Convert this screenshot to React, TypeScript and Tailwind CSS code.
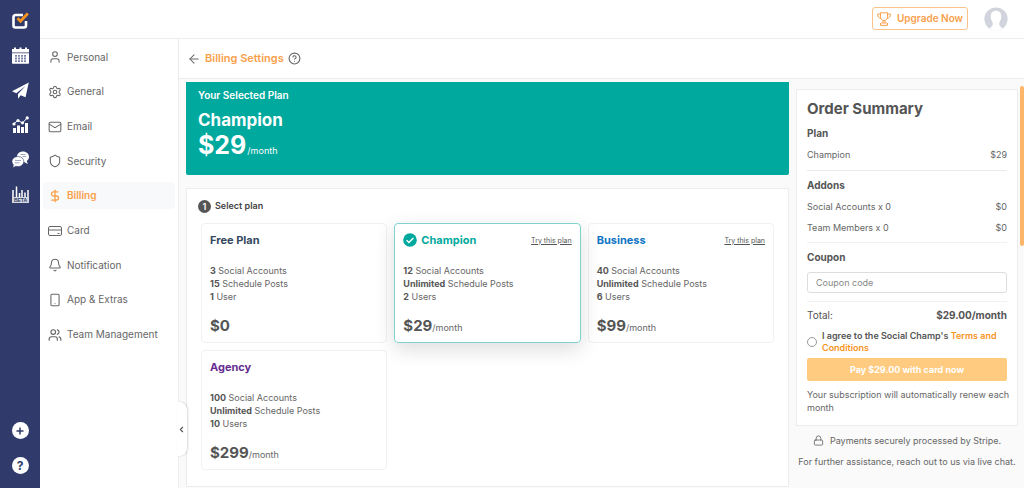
import { useState } from 'react';
import type { ReactNode } from 'react';
import {
  ArrowLeft,
  Bell,
  ChevronLeft,
  CircleHelp,
  DollarSign,
  Lock,
  Mail,
  Settings,
  Shield,
  Smartphone,
  User,
  Users,
} from 'lucide-react';
import clsx from 'clsx';

interface Plan {
  name: string;
  color: string;
  accounts: string;
  posts: string;
  users: string;
  userLabel: string;
  price: string;
  paid: boolean;
  trial: boolean;
}

const plans: Plan[] = [
  { name: 'Free Plan', color: 'text-[#34495e]', accounts: '3', posts: '15', users: '1', userLabel: 'User', price: '$0', paid: false, trial: false },
  { name: 'Champion', color: 'text-[#00a99d]', accounts: '12', posts: 'Unlimited', users: '2', userLabel: 'Users', price: '$29', paid: true, trial: true },
  { name: 'Business', color: 'text-[#0f75c4]', accounts: '40', posts: 'Unlimited', users: '6', userLabel: 'Users', price: '$99', paid: true, trial: true },
  { name: 'Agency', color: 'text-[#662d91]', accounts: '100', posts: 'Unlimited', users: '10', userLabel: 'Users', price: '$299', paid: true, trial: false },
];

const menu: { label: string; icon: ReactNode }[] = [
  { label: 'Personal', icon: <User className="size-[14px]" strokeWidth={1.8} /> },
  { label: 'General', icon: <Settings className="size-[14px]" strokeWidth={1.8} /> },
  { label: 'Email', icon: <Mail className="size-[14px]" strokeWidth={1.8} /> },
  { label: 'Security', icon: <Shield className="size-[14px]" strokeWidth={1.8} /> },
  { label: 'Billing', icon: <DollarSign className="size-[14px]" strokeWidth={2.2} /> },
  { label: 'Card', icon: <CardIcon /> },
  { label: 'Notification', icon: <Bell className="size-[14px]" strokeWidth={1.8} /> },
  { label: 'App & Extras', icon: <Smartphone className="size-[14px]" strokeWidth={1.8} /> },
  { label: 'Team Management', icon: <Users className="size-[14px]" strokeWidth={2} /> },
];

function CardIcon() {
  return (
    <svg viewBox="0 0 14 14" className="size-[14px]" fill="none" stroke="currentColor">
      <rect x=".5" y="2.500" width="13" height="9" rx="1.500" />
      <path d="M.500 6h13M9.500 9.500h2" />
    </svg>
  );
}

function LogoIcon() {
  return (
    <svg viewBox="0 0 17 17" className="size-[17px]" fill="none">
      <path d="M11 3H3.500A2 2 0 0 0 1.500 5v8.500a2 2 0 0 0 2 2H12a2 2 0 0 0 2-2V9" stroke="#fff" strokeWidth="2.600" />
      <path d="M5.500 6.200l3 3L15.800 1.500" stroke="#f7931e" strokeWidth="2.800" />
    </svg>
  );
}

function CalendarIcon() {
  return (
    <svg viewBox="0 0 17 17" className="size-[17px]" fill="#fff">
      <path d="M0 2h2V.500h2V2h3.500V.500h2V2H13V.500h2V2h2v3.500H0z" />
      <path d="M0 6.300h17V16a.8.8 0 0 1-.8.800H.8A.8.8 0 0 1 0 16z" />
      <path
        d="M3 8h2v1.800H3zM6 8h2v1.800H6zM9 8h2v1.800H9zM12 8h2v1.800h-2zM3 10.600h2v1.800H3zM6 10.600h2v1.800H6zM9 10.600h2v1.800H9zM12 10.600h2v1.800h-2zM3 13.200h2V15H3zM6 13.200h2V15H6zM9 13.200h2V15H9zM12 13.200h2V15h-2z"
        fill="#7d85ab"
      />
    </svg>
  );
}

function PlaneIcon() {
  return (
    <svg viewBox="0 0 17 17" className="size-[17px]" fill="#fff">
      <path d="M16.800.500L0 9.300l4.300 1.900L13.500 4 6 12v4.800l2.700-3.500 4.800 2z" />
    </svg>
  );
}

function AnalyticsIcon() {
  return (
    <svg viewBox="0 0 17 17" className="size-[17px]" fill="#fff">
      <path d="M1 12h3v5H1zM5 9.500h3V17H5zM9 11h3v6H9zM13 7h3v10h-3z" />
      <path d="M2 7.500l4-3 4.500 2.500 4.500-5" fill="none" stroke="#fff" strokeWidth="1" />
      <circle cx="2" cy="8" r="1.600" />
      <circle cx="6" cy="4.500" r="1.600" />
      <circle cx="10.500" cy="6.800" r="1.600" />
      <circle cx="15.200" cy="1.900" r="1.600" />
    </svg>
  );
}

function ChatIcon() {
  return (
    <svg viewBox="0 0 17 17" className="size-[17px]">
      <path d="M11 .500c3.400 0 6 2.300 6 5.200 0 1.800-.8 3.200-2.200 4.200l1 3-3.800-1.900C8 11.500 5 9 5 5.800S7.600.500 11 .500z" fill="#fff" />
      <path d="M6 5.500c3.300 0 5.800 2.200 5.800 5s-2.500 5.100-5.800 5.100c-.8 0-1.500-.1-2.200-.3L.8 16.800l.600-3C.500 12.900 0 11.800 0 10.500c0-2.800 2.700-5 6-5z" fill="#fff" stroke="#303b6b" strokeWidth=".6" />
      <path d="M8.500 3.500h5M10.500 5.500H14M3 9.500h6M3 11.800h4.500" stroke="#8a91b3" strokeWidth=".8" />
    </svg>
  );
}

function BetaIcon() {
  return (
    <svg viewBox="0 0 17 17" className="size-[17px]">
      <path d="M1 4v8M4.500.500V12M7.500 7v5M10 4v8M13 6.500V12M16 4v8" stroke="#fff" strokeWidth="1.500" />
      <path d="M0 11h17v6H0z" fill="#d5d7df" />
      <text x="8.500" y="16" textAnchor="middle" fontSize="5" fontWeight="700" fontFamily="Liberation Sans, sans-serif" fill="#303b6b">
        BETA
      </text>
    </svg>
  );
}

function TrophyIcon() {
  return (
    <svg viewBox="0 0 14 14" className="size-[14px]" fill="none" stroke="#f9a04b" strokeWidth="1">
      <path d="M3.500.800h7v4C10.500 7 9 8.500 7 8.500S3.500 7 3.500 4.800z" />
      <path d="M3.500 2H.600c0 2.800 1.200 4 3.400 4.300M10.500 2h2.900c0 2.800-1.200 4-3.400 4.300M6 8.500v2.300M8 8.500v2.300M4.300 11h5.400M3.500 11v2.400h7V11" />
    </svg>
  );
}

function Avatar() {
  return (
    <svg viewBox="0 0 24 24" className="size-6">
      <circle cx="12" cy="12" r="11.600" fill="#d1d4dc" />
      <path d="M12 3.800c3.400 0 5.300 2.400 5.300 5.700 0 2.500-1 4.500-2 5.700v2.300c0 1.700 1.200 2.400 3.200 3.700-1.900 1.600-4.200 2.600-6.500 2.600s-4.600-1-6.500-2.600c2-1.300 3.200-2 3.200-3.700v-2.300c-1-1.200-2-3.200-2-5.700 0-3.300 1.900-5.700 5.300-5.700z" fill="#fff" />
    </svg>
  );
}

const railItems: { label: string; icon: ReactNode }[] = [
  { label: 'Home', icon: <LogoIcon /> },
  { label: 'Calendar', icon: <CalendarIcon /> },
  { label: 'Publish', icon: <PlaneIcon /> },
  { label: 'Analytics', icon: <AnalyticsIcon /> },
  { label: 'Engage', icon: <ChatIcon /> },
  { label: 'Listening', icon: <BetaIcon /> },
];

function Rail() {
  return (
    <nav className="flex w-10 shrink-0 flex-col justify-between bg-[#303b6b] pt-[3px] pb-[5px]">
      <div className="grid h-[209px] auto-rows-fr justify-items-center">
        {railItems.map((item) => (
          <button key={item.label} aria-label={item.label}>
            {item.icon}
          </button>
        ))}
      </div>
      <div className="flex flex-col items-center">
        <button aria-label="Add" className="flex h-[35px] items-center">
          <span className="flex size-[17px] items-center justify-center rounded-full bg-white text-[#303b6b]">
            <svg viewBox="0 0 8 8" className="size-2" stroke="currentColor" strokeWidth="1.500">
              <path d="M4 .500v7M.500 4h7" />
            </svg>
          </span>
        </button>
        <button aria-label="Help" className="flex h-[35px] items-center">
          <span className="flex size-[17px] items-center justify-center rounded-full bg-white text-[12px] font-bold text-[#303b6b]">?</span>
        </button>
      </div>
    </nav>
  );
}

function SideMenu() {
  return (
    <div className="relative w-[139px] shrink-0 border-r border-[#ececec] bg-white pt-px">
      <nav className="grid h-[312px] auto-rows-fr items-center px-[3px]">
        {menu.map(({ label, icon }) => (
          <a
            key={label}
            href="#"
            className={clsx(
              'flex h-[27px] items-center gap-[5px] rounded pl-[5px] text-[10px]',
              label === 'Billing' ? 'bg-[#f8f9fb] font-semibold text-[#f9a04b]' : 'text-[#666]',
            )}
          >
            {icon}
            {label}
          </a>
        ))}
      </nav>
      <button
        aria-label="Collapse menu"
        className="absolute -right-[9px] bottom-[32px] z-10 flex h-[54px] w-[10px] items-center justify-start rounded-r-[8px] bg-white text-[#555] shadow-[1px_0_2px_rgba(0,0,0,0.15)]"
      >
        <ChevronLeft className="size-[9px] shrink-0" strokeWidth={3} />
      </button>
    </div>
  );
}

function PlanCard({ plan, selected, onSelect }: { plan: Plan; selected: boolean; onSelect: () => void }) {
  return (
    <div
      onClick={onSelect}
      className={clsx(
        'h-[120px] rounded border px-2 pt-[7px] text-[9px] leading-[13px] text-[#666]',
        selected ? 'z-10 border-[#7fd3cc] shadow-[0_6px_20px_rgba(0,0,0,0.14)]' : 'border-[#f1f1f1]',
      )}
    >
      <div className="flex h-[18px] items-center justify-between">
        <h3 className={clsx('flex items-center gap-1 text-[11px] font-bold', plan.color)}>
          {selected && (
            <svg viewBox="0 0 14 14" className="size-[14px]">
              <circle cx="7" cy="7" r="6.800" fill="#00a99d" />
              <path d="M3.600 7.200l2.300 2.300 4.500-4.600" fill="none" stroke="#fff" strokeWidth="1.500" />
            </svg>
          )}
          {plan.name}
        </h3>
        {plan.trial && (
          <a href="#" className="text-[7px] text-[#555] underline">
            Try this plan
          </a>
        )}
      </div>
      <ul className="mt-[15px]">
        <li><b className="text-[#555]">{plan.accounts}</b> Social Accounts</li>
        <li><b className="text-[#555]">{plan.posts}</b> Schedule Posts</li>
        <li><b className="text-[#555]">{plan.users}</b> {plan.userLabel}</li>
      </ul>
      <p className="mt-[13px] leading-5">
        <b className="text-[15px] text-[#555]">{plan.price}</b>
        {plan.paid && '/month'}
      </p>
    </div>
  );
}

function SummaryRow({ label, value }: { label: string; value: string }) {
  return (
    <div className="flex justify-between">
      <span>{label}</span>
      <span>{value}</span>
    </div>
  );
}

function OrderSummary() {
  const [coupon, setCoupon] = useState('');

  return (
    <aside className="w-[222px] shrink-0 pt-[10px] text-[#666]">
      <section className="border border-[#ececec] bg-white px-[10px] pt-2 pb-[11px] text-[9px] leading-[21px]">
        <h2 className="text-[15px] leading-[22px] font-bold text-[#555]">Order Summary</h2>
        <h3 className="mt-[3px] text-[10px] font-bold text-[#555]">Plan</h3>
        <SummaryRow label="Champion" value="$29" />
        <hr className="mt-[5px] border-[#e9e9e9]" />
        <h3 className="mt-1 text-[10px] font-bold text-[#555]">Addons</h3>
        <SummaryRow label="Social Accounts x 0" value="$0" />
        <SummaryRow label="Team Members x 0" value="$0" />
        <hr className="mt-1 border-[#f1f1f1]" />
        <label htmlFor="coupon" className="mt-1 block text-[10px] font-bold text-[#555]">
          Coupon
        </label>
        <input
          id="coupon"
          type="text"
          value={coupon}
          onChange={(e) => setCoupon(e.target.value)}
          placeholder="Coupon code"
          className="mt-1 block h-[21px] w-full rounded-[3px] border border-[#ddd] px-2 text-[9px] placeholder:text-[#888]"
        />
        <hr className="mt-2 border-[#f1f1f1]" />
        <div className="mt-[3px] flex justify-between text-[10px] text-[#555]">
          <span>Total:</span>
          <b>$29.00/month</b>
        </div>
        <div className="mt-1 flex items-center gap-[5px] leading-3 font-semibold text-[#555]">
          <input
            id="agree"
            type="checkbox"
            className="size-[10px] shrink-0 appearance-none rounded-full border border-[#999] bg-white checked:bg-[#f7931e]"
          />
          <label htmlFor="agree">
            I agree to the Social Champ's{' '}
            <a href="#" className="text-[#f7931e]">
              Terms and Conditions
            </a>
          </label>
        </div>
        <button className="mt-1 block h-[23px] w-full rounded-[2px] bg-[#ffcb80] text-[9px] font-bold text-white">
          Pay $29.00 with card now
        </button>
        <p className="-mr-2 mt-[7px] leading-[13px]">Your subscription will automatically renew each month</p>
      </section>
      <p className="mt-1 flex items-center justify-center gap-[6px] text-[9px] leading-[21px]">
        <Lock className="size-[11px]" strokeWidth={1.8} />
        Payments securely processed by Stripe.
      </p>
      <p className="text-center text-[9px] leading-[21px]">For further assistance, reach out to us via live chat.</p>
    </aside>
  );
}

export default function App() {
  const [selected, setSelected] = useState('Champion');

  return (
    <div className="flex h-screen overflow-hidden bg-white font-[Inter,sans-serif]">
      <Rail />
      <div className="flex min-w-0 flex-1 flex-col">
        <header className="flex h-[39px] shrink-0 items-center justify-end gap-4 border-b border-[#ececec] pr-4 pb-px">
          <button className="flex h-[23px] items-center gap-[6px] rounded-[3px] border border-[#fbc28a] px-1 text-[10px] font-semibold text-[#f9a04b]">
            <TrophyIcon />
            Upgrade Now
          </button>
          <button aria-label="Account">
            <Avatar />
          </button>
        </header>

        <div className="flex min-h-0 flex-1">
          <SideMenu />
          <main className="flex min-w-0 flex-1 flex-col">
            <div className="flex h-10 shrink-0 items-center border-b border-[#ececec] px-2">
              <button aria-label="Back">
                <ArrowLeft className="size-[14px] text-[#666]" strokeWidth={1.8} />
              </button>
              <h1 className="mx-1 text-[11px] font-semibold text-[#f9a04b]">Billing Settings</h1>
              <button aria-label="Help">
                <CircleHelp className="size-[13px] text-[#666]" />
              </button>
            </div>

            <div className="relative flex min-h-0 flex-1 gap-[7px] overflow-hidden bg-[#fafafa] pr-[6px] pl-[7px]">
              <div className="min-w-0 flex-1 pt-[3px]">
                <section className="h-[93px] rounded-b-[2px] bg-[#00a99d] px-3 pt-1 font-semibold text-white">
                  <p className="text-[10px] leading-[18px]">Your Selected Plan</p>
                  <h2 className="mt-1 text-[17px] leading-6 font-bold">Champion</h2>
                  <p className="text-[25px] leading-[26px] font-bold">
                    $29<span className="ml-px text-[9px] font-normal">/month</span>
                  </p>
                </section>

                <section className="mt-[13px] h-[299px] border border-[#ececec] bg-white">
                  <h2 className="flex h-[34px] items-center gap-1 pl-[11px] text-[9px] font-semibold text-[#444]">
                    <span className="flex size-[13px] items-center justify-center rounded-full bg-[#555] text-[9px] leading-[13px] text-white">1</span>
                    Select plan
                  </h2>
                  <div className="grid grid-cols-3 gap-[7px] px-[14px]">
                    {plans.map((plan) => (
                      <PlanCard
                        key={plan.name}
                        plan={plan}
                        selected={plan.name === selected}
                        onSelect={() => setSelected(plan.name)}
                      />
                    ))}
                  </div>
                </section>
              </div>
              <OrderSummary />
              <div className="absolute top-[7px] right-0 h-[160px] w-1 rounded-sm bg-[#fdb667]" />
            </div>
          </main>
        </div>
      </div>
    </div>
  );
}
